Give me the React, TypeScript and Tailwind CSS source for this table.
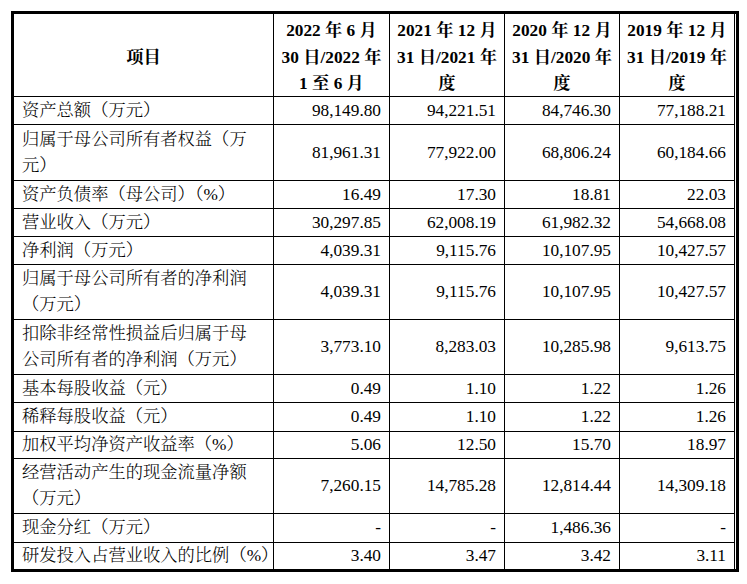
import React from "react";

type Row = { label: string[]; vals: string[]; h: string; last?: boolean };

const rows: Row[] = [
  { label: ["资产总额（万元）"], vals: ["98,149.80", "94,221.51", "84,746.30", "77,188.21"], h: "h-[28px]" },
  { label: ["归属于母公司所有者权益（万", "元）"], vals: ["81,961.31", "77,922.00", "68,806.24", "60,184.66"], h: "h-[56px]" },
  { label: ["资产负债率（母公司）（%）"], vals: ["16.49", "17.30", "18.81", "22.03"], h: "h-[28px]" },
  { label: ["营业收入（万元）"], vals: ["30,297.85", "62,008.19", "61,982.32", "54,668.08"], h: "h-[28px]" },
  { label: ["净利润（万元）"], vals: ["4,039.31", "9,115.76", "10,107.95", "10,427.57"], h: "h-[28px]" },
  { label: ["归属于母公司所有者的净利润", "（万元）"], vals: ["4,039.31", "9,115.76", "10,107.95", "10,427.57"], h: "h-[55px]" },
  { label: ["扣除非经常性损益后归属于母", "公司所有者的净利润（万元）"], vals: ["3,773.10", "8,283.03", "10,285.98", "9,613.75"], h: "h-[55px]" },
  { label: ["基本每股收益（元）"], vals: ["0.49", "1.10", "1.22", "1.26"], h: "h-[28px]" },
  { label: ["稀释每股收益（元）"], vals: ["0.49", "1.10", "1.22", "1.26"], h: "h-[29px]" },
  { label: ["加权平均净资产收益率（%）"], vals: ["5.06", "12.50", "15.70", "18.97"], h: "h-[27px]" },
  { label: ["经营活动产生的现金流量净额", "（万元）"], vals: ["7,260.15", "14,785.28", "12,814.44", "14,309.18"], h: "h-[55px]" },
  { label: ["现金分红（万元）"], vals: ["-", "-", "1,486.36", "-"], h: "h-[29px]" },
  { label: ["研发投入占营业收入的比例（%）"], vals: ["3.40", "3.47", "3.42", "3.11"], h: "h-[26px]", last: true },
];

const headers: string[][] = [
  ["2022 年 6 月", "30 日/2022 年", "1 至 6 月"],
  ["2021 年 12 月", "31 日/2021 年", "度"],
  ["2020 年 12 月", "31 日/2020 年", "度"],
  ["2019 年 12 月", "31 日/2019 年", "度"],
];

const font = {
  fontFamily: '"Liberation Serif", "Noto Serif CJK SC", "Noto Sans CJK SC", serif',
};

export default function App() {
  return (
    <div className="bg-white w-[747px] h-[584px] pt-[11px] pl-[11px] text-black" style={font}>
      <div className="w-[728px] border-[3px] border-black pr-px bg-white">
        <div className="border-r border-black">
          <div className="grid grid-cols-[260px_116px_115px_115px_114px] h-[83px] border-b border-black font-bold text-[17.3px] leading-[26.5px]">
            <div className="border-r border-black flex items-center justify-center pt-[4px]">项目</div>
            {headers.map((h, i) => (
              <div
                key={i}
                className={`${i < 3 ? "border-r border-black" : ""} flex flex-col items-center justify-center pt-[4px] whitespace-nowrap`}
              >
                {h.map((l, j) => (
                  <div key={j}>{l}</div>
                ))}
              </div>
            ))}
          </div>
          {rows.map((r, i) => (
            <div
              key={i}
              className={`grid grid-cols-[260px_116px_115px_115px_114px] ${r.h} ${r.last ? "" : "border-b border-black"} text-[17.3px] leading-[26px]`}
            >
              <div className="border-r border-black flex flex-col justify-center pl-[8px] whitespace-nowrap font-light">
                {r.label.map((l, j) => (
                  <div key={j}>{l}</div>
                ))}
              </div>
              {r.vals.map((v, j) => (
                <div
                  key={j}
                  className={`${j < 3 ? "border-r border-black" : ""} flex items-center justify-end pr-[8px] whitespace-nowrap`}
                >
                  {v}
                </div>
              ))}
            </div>
          ))}
        </div>
      </div>
    </div>
  );
}
